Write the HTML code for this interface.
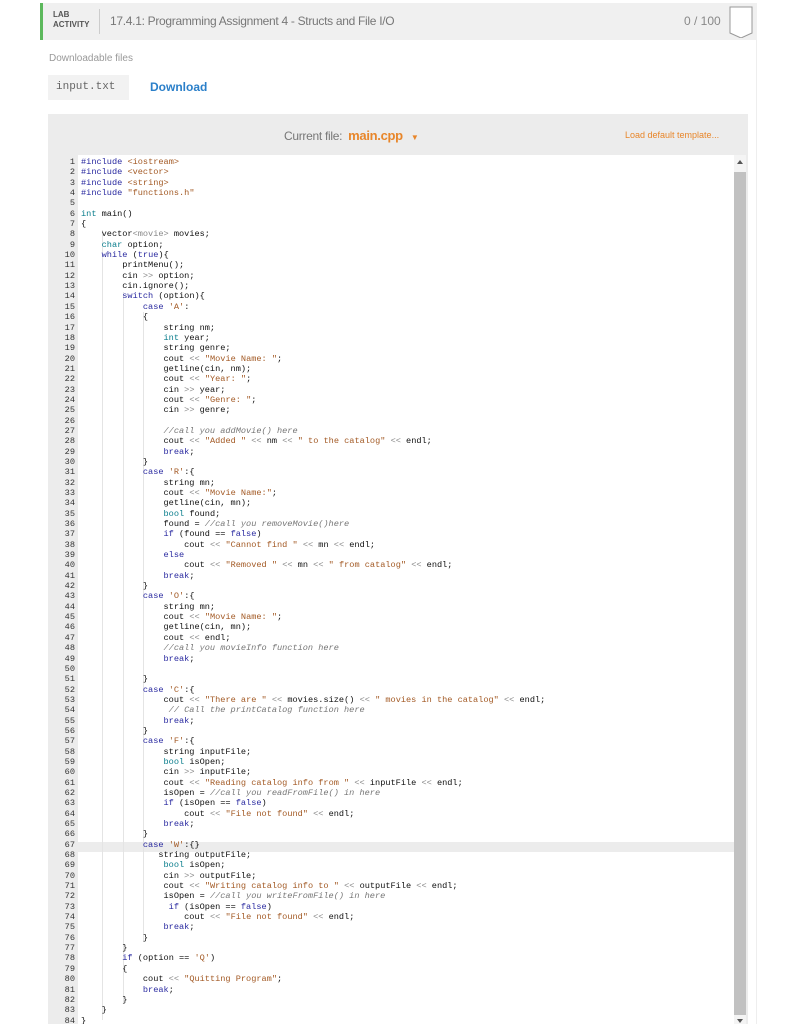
<!DOCTYPE html>
<html><head><meta charset="utf-8">
<style>
*{margin:0;padding:0;box-sizing:border-box}
html,body{width:791px;height:1024px;overflow:hidden}
body{background:#fff;font-family:"Liberation Sans",sans-serif;position:relative}
.card{position:absolute;left:40px;top:3px;width:717px;height:1021px;border-right:1px solid #eee}
.hdr{position:absolute;left:0;top:0;width:717px;height:37px;background:#f0f0f0;border-left:3px solid #5cb85c}
.lab{position:absolute;left:10px;top:7px;font-size:8px;font-weight:bold;color:#555;line-height:10px}
.sep{position:absolute;left:56px;top:6px;width:1px;height:25px;background:#ccc}
.title{position:absolute;left:67px;top:11px;font-size:12px;color:#777;letter-spacing:-0.3px}
.score{position:absolute;left:641px;top:11px;font-size:12px;color:#888}
.badge{position:absolute;left:686px;top:3px}
.dl{position:absolute;left:49px;top:53px;font-size:10px;color:#999}
.file{position:absolute;left:48px;top:75px;width:81px;height:25px;background:#f2f2f2;font-family:"Liberation Mono",monospace;font-size:11px;color:#666;padding:6px 0 0 8px}
.down{position:absolute;left:150px;top:80px;font-size:12px;font-weight:bold;color:#2a7fc9}
.panel{position:absolute;left:48px;top:114px;width:700px;height:910px;background:#ececec;overflow:hidden}
.cf{position:absolute;left:236px;top:14px;font-size:12px;color:#777;letter-spacing:-0.3px}
.cf b{color:#e8862a;font-size:13px;margin-left:3px}
.cf i{font-style:normal;color:#e8862a;font-size:8px;margin-left:8px}
.ldt{position:absolute;left:577px;top:16px;font-size:9px;color:#e8862a}
.gut{position:absolute;left:0;top:41px;width:30px;height:869px;background:#ececec}
.ed{position:absolute;left:30px;top:41px;width:656px;height:869px;background:#fff}
.sb{position:absolute;left:686px;top:41px;width:12px;height:869px;background:#f4f4f4}
.thumb{position:absolute;left:686px;top:58px;width:12px;height:843px;background:#c1c1c1}
.up{position:absolute;left:689px;top:46px;width:0;height:0;border-left:3px solid transparent;border-right:3px solid transparent;border-bottom:4px solid #555}
.dn{position:absolute;left:689px;top:905px;width:0;height:0;border-left:3px solid transparent;border-right:3px solid transparent;border-top:4px solid #555}
.cl{position:absolute;left:30px;top:728px;width:656px;height:10.35px;background:#ececec}
pre{position:absolute;top:43px;font-family:"Liberation Mono",monospace;font-size:8.6px;line-height:10.35px;color:#111}
.ln{left:0;width:27px;text-align:right;color:#333}
.code{left:33px}
.k{color:#2a2aa0}.t{color:#0a7d8c}.s{color:#a35a25}.c{color:#777;font-style:italic}.o{color:#888}
.g{position:absolute;width:1px;background:#e4e4e4}
</style></head><body>
<div class="card">
<div class="hdr"><div class="lab">LAB<br>ACTIVITY</div><div class="sep"></div>
<div class="title">17.4.1: Programming Assignment 4 - Structs and File I/O</div>
<div class="score">0 / 100</div>
<svg class="badge" width="24" height="32" viewBox="0 0 24 32"><path d="M1 1H23V27L12 32L1 27Z" fill="#fff" stroke="#999" stroke-width="1"/></svg>
</div>
</div>
<div class="dl">Downloadable files</div>
<div class="file">input.txt</div>
<div class="down">Download</div>
<div class="panel">
<div class="cf">Current file: <b>main.cpp</b><i>▼</i></div>
<div class="ldt">Load default template...</div>
<div class="gut"></div><div class="ed"></div><div class="cl"></div>
<div class="g" style="left:54px;top:116px;height:790px"></div>
<div class="g" style="left:75px;top:178px;height:710px"></div>
<div class="g" style="left:95px;top:198px;height:630px"></div>
<div class="sb"></div><div class="thumb"></div><div class="up"></div><div class="dn"></div>
<pre class="ln">1
2
3
4
5
6
7
8
9
10
11
12
13
14
15
16
17
18
19
20
21
22
23
24
25
26
27
28
29
30
31
32
33
34
35
36
37
38
39
40
41
42
43
44
45
46
47
48
49
50
51
52
53
54
55
56
57
58
59
60
61
62
63
64
65
66
67
68
69
70
71
72
73
74
75
76
77
78
79
80
81
82
83
84</pre>
<pre class="code"><span class="k">#include</span> <span class="s">&lt;iostream&gt;</span>
<span class="k">#include</span> <span class="s">&lt;vector&gt;</span>
<span class="k">#include</span> <span class="s">&lt;string&gt;</span>
<span class="k">#include</span> <span class="s">"functions.h"</span>

<span class="t">int</span> main()
{
    vector<span class="o">&lt;movie&gt;</span> movies;
    <span class="t">char</span> option;
    <span class="k">while</span> (<span class="k">true</span>){
        printMenu();
        cin <span class="o">&gt;&gt;</span> option;
        cin.ignore();
        <span class="k">switch</span> (option){
            <span class="k">case</span> <span class="s">'A'</span>:
            {
                string nm;
                <span class="t">int</span> year;
                string genre;
                cout <span class="o">&lt;&lt;</span> <span class="s">"Movie Name: "</span>;
                getline(cin, nm);
                cout <span class="o">&lt;&lt;</span> <span class="s">"Year: "</span>;
                cin <span class="o">&gt;&gt;</span> year;
                cout <span class="o">&lt;&lt;</span> <span class="s">"Genre: "</span>;
                cin <span class="o">&gt;&gt;</span> genre;

                <span class="c">//call you addMovie() here</span>
                cout <span class="o">&lt;&lt;</span> <span class="s">"Added "</span> <span class="o">&lt;&lt;</span> nm <span class="o">&lt;&lt;</span> <span class="s">" to the catalog"</span> <span class="o">&lt;&lt;</span> endl;
                <span class="k">break</span>;
            }
            <span class="k">case</span> <span class="s">'R'</span>:{
                string mn;
                cout <span class="o">&lt;&lt;</span> <span class="s">"Movie Name:"</span>;
                getline(cin, mn);
                <span class="t">bool</span> found;
                found = <span class="c">//call you removeMovie()here</span>
                <span class="k">if</span> (found == <span class="k">false</span>)
                    cout <span class="o">&lt;&lt;</span> <span class="s">"Cannot find "</span> <span class="o">&lt;&lt;</span> mn <span class="o">&lt;&lt;</span> endl;
                <span class="k">else</span>
                    cout <span class="o">&lt;&lt;</span> <span class="s">"Removed "</span> <span class="o">&lt;&lt;</span> mn <span class="o">&lt;&lt;</span> <span class="s">" from catalog"</span> <span class="o">&lt;&lt;</span> endl;
                <span class="k">break</span>;
            }
            <span class="k">case</span> <span class="s">'O'</span>:{
                string mn;
                cout <span class="o">&lt;&lt;</span> <span class="s">"Movie Name: "</span>;
                getline(cin, mn);
                cout <span class="o">&lt;&lt;</span> endl;
                <span class="c">//call you movieInfo function here</span>
                <span class="k">break</span>;

            }
            <span class="k">case</span> <span class="s">'C'</span>:{
                cout <span class="o">&lt;&lt;</span> <span class="s">"There are "</span> <span class="o">&lt;&lt;</span> movies.size() <span class="o">&lt;&lt;</span> <span class="s">" movies in the catalog"</span> <span class="o">&lt;&lt;</span> endl;
                 <span class="c">// Call the printCatalog function here</span>
                <span class="k">break</span>;
            }
            <span class="k">case</span> <span class="s">'F'</span>:{
                string inputFile;
                <span class="t">bool</span> isOpen;
                cin <span class="o">&gt;&gt;</span> inputFile;
                cout <span class="o">&lt;&lt;</span> <span class="s">"Reading catalog info from "</span> <span class="o">&lt;&lt;</span> inputFile <span class="o">&lt;&lt;</span> endl;
                isOpen = <span class="c">//call you readFromFile() in here</span>
                <span class="k">if</span> (isOpen == <span class="k">false</span>)
                    cout <span class="o">&lt;&lt;</span> <span class="s">"File not found"</span> <span class="o">&lt;&lt;</span> endl;
                <span class="k">break</span>;
            }
            <span class="k">case</span> <span class="s">'W'</span>:{}
               string outputFile;
                <span class="t">bool</span> isOpen;
                cin <span class="o">&gt;&gt;</span> outputFile;
                cout <span class="o">&lt;&lt;</span> <span class="s">"Writing catalog info to "</span> <span class="o">&lt;&lt;</span> outputFile <span class="o">&lt;&lt;</span> endl;
                isOpen = <span class="c">//call you writeFromFile() in here</span>
                 <span class="k">if</span> (isOpen == <span class="k">false</span>)
                    cout <span class="o">&lt;&lt;</span> <span class="s">"File not found"</span> <span class="o">&lt;&lt;</span> endl;
                <span class="k">break</span>;
            }
        }
        <span class="k">if</span> (option == <span class="s">'Q'</span>)
        {
            cout <span class="o">&lt;&lt;</span> <span class="s">"Quitting Program"</span>;
            <span class="k">break</span>;
        }
    }
}</pre>
</div>
</body></html>
